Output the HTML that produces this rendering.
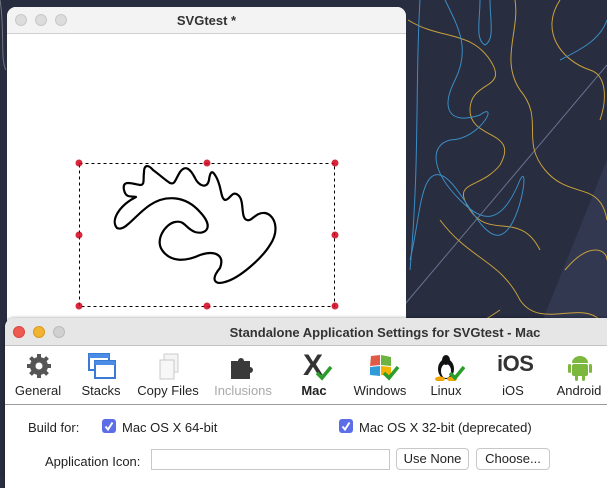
<!DOCTYPE html>
<html><head><meta charset="utf-8"><style>
*{margin:0;padding:0;box-sizing:border-box}
body{width:607px;height:476px;overflow:hidden;position:relative;background:#2a2f42;font-family:"Liberation Sans",sans-serif}
.abs{position:absolute}
.light{position:absolute;width:12px;height:12px;border-radius:50%;}
.lbl{position:absolute;top:383px;font-size:13px;color:#222;text-align:center;width:80px}
.ic{position:absolute;top:353px}
</style></head><body>
<svg class="abs" style="left:0;top:0" width="607" height="476">
<rect width="607" height="476" fill="#282d40"/>
<polygon points="480,476 607,160 607,476" fill="#39405c" opacity=".6"/>
<line x1="400" y1="310" x2="607" y2="65" stroke="#6a7290" stroke-width="1"/>
<g fill="none" stroke="#c9a13c" stroke-width="1">
<path d="M408,20 C440,40 470,30 490,60 C510,90 470,80 470,110 C470,140 520,130 500,165 C480,190 450,180 470,210 C490,240 520,210 540,250"/>
<path d="M515,0 C520,30 500,60 520,90 C545,120 520,140 545,170 C570,200 600,180 607,220"/>
<path d="M560,0 C540,30 560,60 590,70 C607,75 607,100 600,120"/>
<path d="M440,220 C470,260 500,260 520,300 C540,330 580,300 600,320"/>
<path d="M410,320 C440,350 470,330 500,310"/>
<path d="M565,270 C590,240 607,250 607,260"/>
</g>
<g fill="none" stroke="#3b8dc4" stroke-width="1">
<path d="M420,0 C415,80 420,160 410,270"/>
<path d="M445,0 C460,30 470,50 455,80 C440,110 450,125 480,115 C500,100 480,140 450,140 C430,145 430,170 460,200 C480,220 500,230 520,180 C530,160 520,230 500,235 C480,240 460,180 440,175 C420,170 420,220 410,260"/>
<path d="M480,0 C480,20 475,40 485,45 C495,40 490,20 490,0"/>
<path d="M560,60 C580,50 600,40 607,20"/>
</g>
<g fill="none" stroke="#bdbdbd" stroke-width="1" opacity=".5"><path d="M0,0 C5,30 0,60 6,70"/></g>
</svg>

<div class="abs" style="left:7px;top:7px;width:399px;height:320px;background:#fff;border-radius:9px 9px 0 0;overflow:hidden">
 <div class="abs" style="left:0;top:0;width:399px;height:27px;background:#f3f3f3;border-bottom:1px solid #cfcfcf"></div>
 <div class="light" style="left:8px;top:7px;background:#dcdcdc;border:1px solid #c8c8c8"></div>
 <div class="light" style="left:28px;top:7px;background:#dcdcdc;border:1px solid #c8c8c8"></div>
 <div class="light" style="left:48px;top:7px;background:#dcdcdc;border:1px solid #c8c8c8"></div>
 <div class="abs" style="left:0;top:6px;width:399px;text-align:center;font-size:13px;font-weight:bold;color:#333">SVGtest *</div>
</div>
<svg class="abs" style="left:0;top:0" width="607" height="476">
<rect x="79.5" y="163.5" width="255" height="143" fill="none" stroke="#000" stroke-dasharray="3,3"/>
<g fill="#d0021b" opacity=".85">
<circle cx="79" cy="163" r="3.5"/><circle cx="207" cy="163" r="3.5"/><circle cx="335" cy="163" r="3.5"/>
<circle cx="79" cy="235" r="3.5"/><circle cx="335" cy="235" r="3.5"/>
<circle cx="79" cy="306" r="3.5"/><circle cx="207" cy="306" r="3.5"/><circle cx="335" cy="306" r="3.5"/>
</g>
<path d="M136,197 C120,205 110,220 117,228 C125,232 135,215 150,205 C165,195 185,195 200,212 C215,228 205,235 195,232 C185,228 185,220 175,222 C165,224 155,240 162,250 C170,262 185,262 200,255 C215,250 225,255 220,268 C210,280 215,285 225,282 C240,278 262,258 270,245 C280,230 275,215 265,213 C255,212 252,222 247,220 C240,218 245,200 238,195 C232,190 230,200 225,200 C220,198 222,185 215,175 C212,170 210,172 209,180 C207,190 198,185 195,178 C190,168 185,165 180,172 C175,180 175,185 170,183 C165,180 160,175 153,170 C148,164 144,165 144,172 C143,180 145,185 140,185 C130,183 122,180 124,190 C126,198 130,196 136,197 Z" fill="none" stroke="#000" stroke-width="2.2" stroke-linejoin="round"/>
</svg>

<div class="abs" style="left:5px;top:318px;width:610px;height:170px;background:#fff;border-radius:9px 0 0 0;overflow:hidden;box-shadow:0 0 3px rgba(0,0,0,.4)">
 <div class="abs" style="left:0;top:0;width:610px;height:28px;background:#e6e6e6;border-bottom:1px solid #c4c4c4"></div>
 <div class="light" style="left:8px;top:8px;background:#ee5a52;border:1px solid #d44"></div>
 <div class="light" style="left:28px;top:8px;background:#f1b430;border:1px solid #d99a1c"></div>
 <div class="light" style="left:48px;top:8px;background:#d0d0d0;border:1px solid #bbb"></div>
 <div class="abs" style="left:130px;top:7px;width:500px;text-align:center;font-size:13px;font-weight:bold;color:#333">Standalone Application Settings for SVGtest - Mac</div>
 <div class="abs" style="left:0;top:29px;width:610px;height:58px;background:#fff;border-bottom:1px solid #9a9a9a"></div>
</div>

<svg class="ic" style="left:26px" width="26" height="26" viewBox="0 0 26 26"><g fill="#555"><circle cx="13" cy="13" r="9"/><g stroke="#555" stroke-width="4"><line x1="13" y1="1" x2="13" y2="25"/><line x1="1" y1="13" x2="25" y2="13"/><line x1="4.5" y1="4.5" x2="21.5" y2="21.5"/><line x1="21.5" y1="4.5" x2="4.5" y2="21.5"/></g></g><circle cx="13" cy="13" r="3.5" fill="#fff"/></svg>
<svg class="ic" style="left:88px" width="28" height="26"><rect x="1" y="1" width="20" height="16" fill="#fff" stroke="#3a7bd5" stroke-width="2"/><rect x="1" y="1" width="20" height="4" fill="#4a8be5"/><rect x="7" y="8" width="20" height="17" fill="#fff" stroke="#3a7bd5" stroke-width="2"/><rect x="7" y="8" width="20" height="4" fill="#4a8be5"/></svg>
<svg class="ic" style="left:158px" width="22" height="28"><rect x="6" y="1" width="14" height="18" fill="#f4f4f4" stroke="#ccc"/><rect x="2" y="7" width="14" height="19" fill="#f7f7f7" stroke="#c8c8c8"/></svg>
<svg class="ic" style="left:229px" width="28" height="28"><path d="M2,8 h7 a3,3 0 1 1 6,0 h6 v6 a3,3 0 1 1 0,6 v6 h-19 z" fill="#3a3a3a"/></svg>
<div class="abs" style="left:303px;top:349px;font-size:30px;font-weight:bold;color:#333">X</div>
<svg class="abs" style="left:315px;top:365px" width="18" height="16"><path d="M2,8 l5,5 l9,-11" fill="none" stroke="#2a9d2a" stroke-width="3.5"/></svg>
<svg class="ic" style="left:368px" width="28" height="26"><path d="M3,3 l9,-1 v10 l-10,1z" fill="#e05a45"/><path d="M13,2 l10,2 v9 l-10,-1z" fill="#6cb33f"/><path d="M2,14 l10,-1 v10 l-10,-1z" fill="#2f9bd8"/><path d="M13,13 l10,1 v9 l-10,-1z" fill="#f3b400"/></svg>
<svg class="abs" style="left:382px;top:365px" width="18" height="16"><path d="M2,8 l5,5 l9,-11" fill="none" stroke="#2a9d2a" stroke-width="3.5"/></svg>
<svg class="ic" style="left:434px" width="26" height="28"><ellipse cx="12" cy="16" rx="8" ry="10" fill="#111"/><ellipse cx="12" cy="18" rx="5" ry="7" fill="#fff"/><ellipse cx="12" cy="7" rx="4" ry="5" fill="#111"/><ellipse cx="6" cy="26" rx="5" ry="2.5" fill="#f0a500"/><ellipse cx="18" cy="26" rx="5" ry="2.5" fill="#f0a500"/></svg>
<svg class="abs" style="left:448px;top:365px" width="18" height="16"><path d="M2,8 l5,5 l9,-11" fill="none" stroke="#2a9d2a" stroke-width="3.5"/></svg>
<div class="abs" style="left:497px;top:351px;font-size:22px;font-weight:bold;color:#333;letter-spacing:-0.5px">iOS</div>
<svg class="ic" style="left:567px" width="26" height="30"><path d="M5,10 a8,7 0 0 1 16,0z" fill="#7cb83e"/><rect x="5" y="11" width="16" height="12" rx="2" fill="#7cb83e"/><rect x="1" y="11" width="3" height="9" rx="1.5" fill="#7cb83e"/><rect x="22" y="11" width="3" height="9" rx="1.5" fill="#7cb83e"/><rect x="8" y="22" width="3" height="6" rx="1.5" fill="#7cb83e"/><rect x="15" y="22" width="3" height="6" rx="1.5" fill="#7cb83e"/></svg>

<div class="lbl" style="left:-2px">General</div>
<div class="lbl" style="left:61px">Stacks</div>
<div class="lbl" style="left:128px">Copy Files</div>
<div class="lbl" style="left:203px;color:#a8a8a8">Inclusions</div>
<div class="lbl" style="left:274px;font-weight:bold">Mac</div>
<div class="lbl" style="left:340px">Windows</div>
<div class="lbl" style="left:406px">Linux</div>
<div class="lbl" style="left:473px">iOS</div>
<div class="lbl" style="left:539px">Android</div>

<div class="abs" style="left:28px;top:420px;font-size:13px;color:#222">Build for:</div>
<div class="abs" style="left:102px;top:419px;width:14px;height:14px;border-radius:3px;background:#5b6ee8"></div>
<svg class="abs" style="left:102px;top:419px" width="14" height="14"><path d="M3.5,7.5 l2.5,3 l4.5,-7" fill="none" stroke="#fff" stroke-width="2"/></svg>
<div class="abs" style="left:122px;top:420px;font-size:13px;color:#222">Mac OS X 64-bit</div>
<div class="abs" style="left:339px;top:419px;width:14px;height:14px;border-radius:3px;background:#5b6ee8"></div>
<svg class="abs" style="left:339px;top:419px" width="14" height="14"><path d="M3.5,7.5 l2.5,3 l4.5,-7" fill="none" stroke="#fff" stroke-width="2"/></svg>
<div class="abs" style="left:359px;top:420px;font-size:13px;color:#222">Mac OS X 32-bit (deprecated)</div>
<div class="abs" style="left:45px;top:454px;font-size:13px;color:#222">Application Icon:</div>
<div class="abs" style="left:151px;top:449px;width:239px;height:21px;background:#fff;border:1px solid #c8c8c8"></div>
<div class="abs" style="left:396px;top:448px;width:73px;height:22px;background:#fff;border:1px solid #c8c8c8;border-radius:4px;font-size:13px;text-align:center;line-height:20px;color:#222">Use None</div>
<div class="abs" style="left:476px;top:448px;width:74px;height:22px;background:#fff;border:1px solid #c8c8c8;border-radius:4px;font-size:13px;text-align:center;line-height:20px;color:#222">Choose...</div>
</body></html>
